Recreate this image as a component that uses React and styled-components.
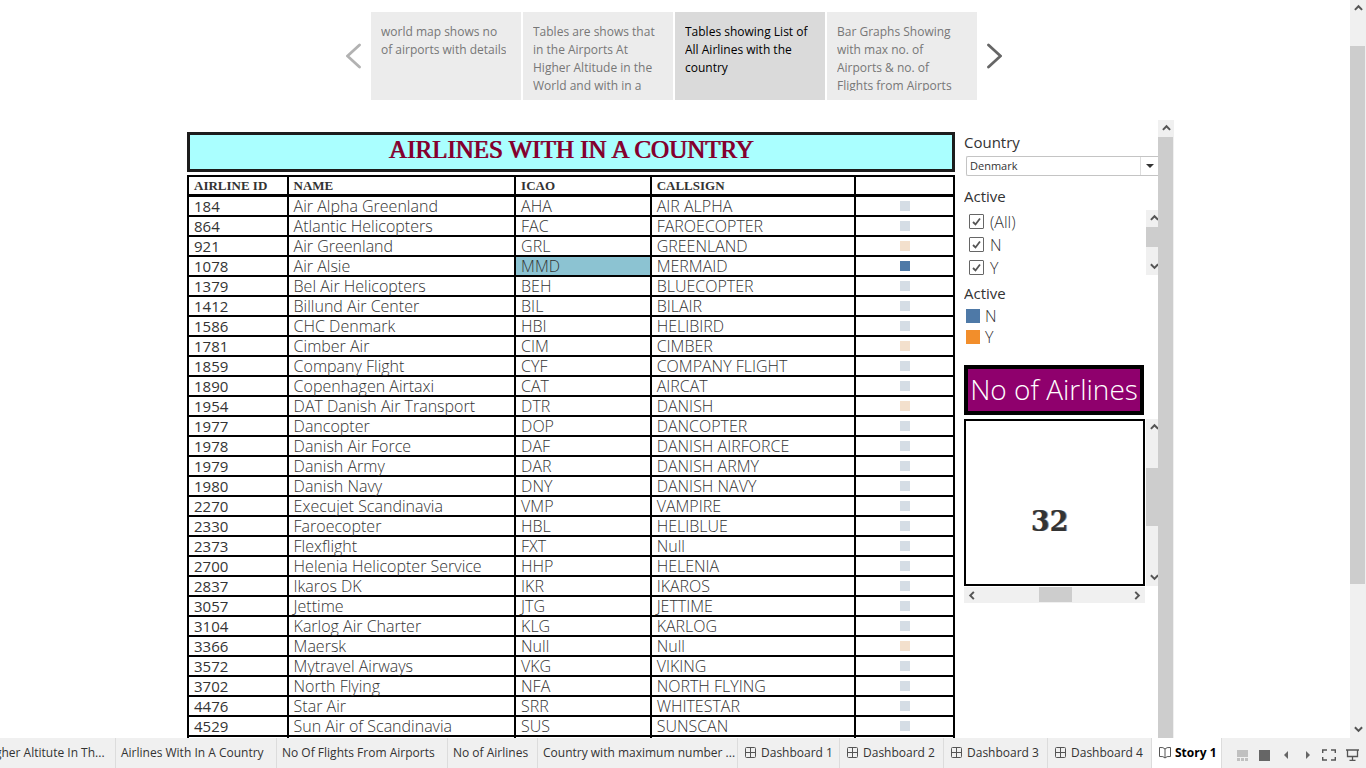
import React from "react";
import styled, { createGlobalStyle } from "styled-components";

const GlobalStyle = createGlobalStyle`
  *, *::before, *::after { box-sizing: border-box; }
  body {
    margin: 0;
    background: #fff;
    color: #333;
    font-family: "Open Sans", "Noto Sans", sans-serif;
    font-weight: 300;
  }
  button { font: inherit; color: inherit; border: 0; padding: 0; background: none; cursor: pointer; }
`;

const serif = `"Liberation Serif", "Times New Roman", serif`;

const Page = styled.div`
  display: flex;
  flex-direction: column;
  height: 100vh;
  overflow: hidden;
`;

const Workspace = styled.div`
  display: flex;
  flex: 1;
  min-height: 0;
`;

const Story = styled.main`
  flex: 1;
  min-width: 0;
  overflow: hidden;
  display: flex;
  flex-direction: column;
  align-items: center;
  padding: 12px 2px 0 0;
`;

/* Story points */

const StoryNav = styled.nav`
  display: flex;
  align-items: center;
  gap: 9px;
  flex-shrink: 0;
`;

const NavArrow = styled.button`
  display: flex;
  color: ${(p) => (p.$dim ? "#b2b2b2" : "#666")};
`;

const Points = styled.div`
  display: flex;
  gap: 2px;
`;

const Point = styled.button`
  width: 150px;
  height: 88px;
  padding: 11px 0 9px 10px;
  display: flex;
  align-items: flex-start;
  text-align: left;
  background: ${(p) => (p.$active ? "#dadada" : "#ececec")};
  color: ${(p) => (p.$active ? "#000" : "#777")};
`;

const PointText = styled.span`
  display: block;
  max-height: 68px;
  overflow: hidden;
  font-size: 12px;
  font-weight: 400;
  line-height: 18px;
  white-space: pre;
`;

/* Dashboard */

const Dashboard = styled.section`
  display: flex;
  flex: 1;
  min-height: 0;
  width: 100%;
  max-width: 1000px;
  margin-top: 20px;
`;

const Content = styled.div`
  flex: 1;
  min-width: 0;
  display: flex;
  gap: 9px;
  padding: 12px 0 0 13px;
  overflow: hidden;
`;

const Sheet = styled.div`
  flex: 1;
  min-width: 0;
`;

const Title = styled.h1`
  margin: 0 0 3px;
  height: 40px;
  border: 3px solid #1c1c1c;
  background: #aaffff;
  color: #84002e;
  font-family: ${serif};
  font-size: 25px;
  font-weight: 400;
  line-height: 30px;
  text-align: center;
  text-shadow: 1px 0 #84002e;
`;

const Table = styled.table`
  width: 100%;
  table-layout: fixed;
  border-collapse: collapse;
  font-size: 16px;
  line-height: 18px;
`;

const Col = styled.col`
  width: ${(p) => p.$w};
`;

const cell = `
  height: 20px;
  padding: 0 0 0 5px;
  border: 2px solid #000;
  text-align: left;
  white-space: nowrap;
`;

const HeadCell = styled.th`
  ${cell}
  height: 19px;
  padding-top: 1px;
  border-bottom-width: 3px;
  font-family: ${serif};
  font-size: 13px;
  font-weight: 700;
  line-height: 15px;
`;

const IdCell = styled.th`
  ${cell}
  font-size: 15px;
  font-weight: 400;
`;

const Cell = styled.td`
  ${cell}
  background: ${(p) => (p.$selected ? "#8cc3d2" : "transparent")};
`;

const Mark = styled.span`
  display: block;
  width: 10px;
  height: 10px;
  margin: 0 auto;
  background: ${(p) => p.$color};
`;

const MarkCell = styled(Cell)`
  padding: 0;
`;

/* Side panel */

const Side = styled.aside`
  width: 194px;
  flex-shrink: 0;
  overflow: hidden;
`;

const Label = styled.label`
  display: block;
  height: 24px;
  font-size: 15px;
  font-weight: 400;
  line-height: 20px;
`;

const Caption = styled.legend`
  padding: 0;
  height: 23px;
  font-size: 15px;
  font-weight: 400;
  line-height: 22px;
`;

const SelectBox = styled.div`
  display: flex;
  height: 20px;
  margin-left: 2px;
  position: relative;
  border: 1px solid #c4c4c4;
  border-right: 0;
  border-radius: 2px 0 0 2px;
`;

const Select = styled.select`
  flex: 1;
  appearance: none;
  border: 0;
  padding: 0 0 2px 3px;
  background: transparent;
  color: #333;
  font: 400 11px "Open Sans", sans-serif;
`;

const SelectArrow = styled.span`
  position: absolute;
  right: 0;
  top: 0;
  width: 18px;
  height: 18px;
  display: grid;
  place-items: center;
  border-left: 1px solid #ddd;
  pointer-events: none;
`;

const Group = styled.fieldset`
  margin: 0;
  padding: 0;
  border: 0;
  min-width: 0;
  margin-top: ${(p) => p.$top}px;
`;

const Options = styled.div`
  display: flex;
  justify-content: space-between;
  height: 65px;
  margin-top: 2px;
  overflow: hidden;
`;

const OptionList = styled.div`
  padding: 0 0 0 5px;
`;

const Option = styled.label`
  display: flex;
  align-items: center;
  gap: 6px;
  height: 23px;
  font-size: 16px;
`;

const Check = styled.input`
  appearance: none;
  margin: 0;
  width: 15px;
  height: 15px;
  border: 1px solid #666;
  border-radius: 1px;
  background: #fff url("data:image/svg+xml,%3Csvg xmlns='http://www.w3.org/2000/svg' viewBox='0 0 13 13'%3E%3Cpath d='M3 7l2.5 2.5L10 3.5' fill='none' stroke='%23555' stroke-width='1.8'/%3E%3C/svg%3E") center / 13px 13px no-repeat;
`;

const Key = styled.div`
  display: flex;
  align-items: center;
  gap: 5px;
  height: 21px;
  padding-left: 2px;
  font-size: 16px;
`;

const Swatch = styled.span`
  width: 14px;
  height: 14px;
  background: ${(p) => p.$color};
`;

const CountTitle = styled.h2`
  width: 180px;
  height: 50px;
  margin: 18px 0 4px;
  border: 4px solid #000;
  background: #8f006d;
  color: #fff;
  font-size: 28px;
  font-weight: 300;
  line-height: 40px;
  text-align: center;
  white-space: nowrap;
`;

const CountRow = styled.div`
  display: flex;
  gap: 1px;
  height: 167px;
`;

const Count = styled.div`
  width: 181px;
  flex-shrink: 0;
  border: 2px solid #000;
  display: grid;
  place-items: center;
  padding: 38px 10px 0 0;
  font-family: "DejaVu Serif", serif;
  font-size: 27px;
  font-weight: 700;
  text-shadow: 1px 0 #999;
`;

/* Scrollbars */

const Bar = styled.div`
  display: flex;
  flex-direction: ${(p) => (p.$horizontal ? "row" : "column")};
  ${(p) => (p.$horizontal ? "height: 16px; width: 181px; margin-top: 1px;" : "width: 16px;")}
  flex-shrink: 0;
  background: #f0f0f0;
`;

const BarButton = styled.button`
  width: 16px;
  height: 17px;
  flex-shrink: 0;
  display: grid;
  place-items: center;
`;

const Track = styled.div`
  flex: 1;
  min-height: 0;
  display: flex;
  flex-direction: inherit;
  padding: ${(p) => p.$inset || "0"};
`;

const Thumb = styled.div`
  flex: 1;
  background: #cdcdcd;
  ${(p) => (p.$horizontal ? "margin-bottom: 1px;" : "margin-right: 1px;")}
`;

const ClippedBar = styled.div`
  width: 12px;
  display: flex;
  overflow: hidden;
`;

/* Sheet tabs */

const Footer = styled.footer`
  display: flex;
  height: 30px;
  flex-shrink: 0;
  background: #f0f0f0;
  color: #333;
`;

const Tabs = styled.nav`
  flex: 1;
  min-width: 0;
  display: flex;
  justify-content: flex-end;
  overflow: hidden;
`;

const Tab = styled.button`
  width: ${(p) => p.$w}px;
  flex-shrink: 0;
  display: flex;
  align-items: center;
  gap: 4px;
  padding: 0 0 2px ${(p) => (p.$icon ? 7 : 5)}px;
  border-right: 1px solid #dcdcdc;
  font-size: 12px;
  font-weight: ${(p) => (p.$active ? 700 : 400)};
  color: ${(p) => (p.$active ? "#000" : "#333")};
  background: ${(p) => (p.$active ? "#fff" : "transparent")};
  white-space: nowrap;
`;

const Tools = styled.div`
  width: 144px;
  display: flex;
  justify-content: space-between;
  align-items: center;
  padding: 4px 7px 0 15px;
`;

const Tool = styled.button`
  display: flex;
`;

const arrows = {
  up: "M1 6.5L5 2.5L9 6.5",
  down: "M1 2.5L5 6.5L9 2.5",
  left: "M6.5 1L2.5 5L6.5 9",
  right: "M2.5 1L6.5 5L2.5 9",
};

function Arrow({ dir }) {
  return (
    <BarButton aria-label={`Scroll ${dir}`}>
      <svg width="9" height="9" viewBox="0 0 10 10" fill="none" stroke="#555" strokeWidth="2.2">
        <path d={arrows[dir]} />
      </svg>
    </BarButton>
  );
}

function Scrollbar({ horizontal, inset }) {
  return (
    <Bar $horizontal={horizontal}>
      <Arrow dir={horizontal ? "left" : "up"} />
      <Track $inset={inset}>
        <Thumb $horizontal={horizontal} />
      </Track>
      <Arrow dir={horizontal ? "right" : "down"} />
    </Bar>
  );
}

function DashboardIcon() {
  return (
    <svg width="12" height="11" viewBox="0 0 12 11" fill="none" stroke="#555">
      <rect x="0.5" y="0.5" width="10" height="10" rx="1" />
      <path d="M5.5 0.5v10M0.5 5.5h10" />
    </svg>
  );
}

function StoryIcon() {
  return (
    <svg width="12" height="13" viewBox="0 0 12 13" fill="none" stroke="#555">
      <path d="M0.5 1.5Q4.5 1 6 3Q7.5 1 11.5 1.5V10.5Q7.5 10 6 12Q4.5 10 0.5 10.5ZM6 3V12" />
    </svg>
  );
}

const points = [
  "world map shows no\nof airports with details",
  "Tables are shows that\nin the Airports At\nHigher Altitude in the\nWorld and with in a",
  "Tables showing List of\nAll Airlines with the\ncountry",
  "Bar Graphs Showing\nwith max no. of\nAirports & no. of\nFlights from Airports",
];

const airlines = [
  ["184", "Air Alpha Greenland", "AHA", "AIR ALPHA"],
  ["864", "Atlantic Helicopters", "FAC", "FAROECOPTER"],
  ["921", "Air Greenland", "GRL", "GREENLAND", "Y"],
  ["1078", "Air Alsie", "MMD", "MERMAID", "selected"],
  ["1379", "Bel Air Helicopters", "BEH", "BLUECOPTER"],
  ["1412", "Billund Air Center", "BIL", "BILAIR"],
  ["1586", "CHC Denmark", "HBI", "HELIBIRD"],
  ["1781", "Cimber Air", "CIM", "CIMBER", "Y"],
  ["1859", "Company Flight", "CYF", "COMPANY FLIGHT"],
  ["1890", "Copenhagen Airtaxi", "CAT", "AIRCAT"],
  ["1954", "DAT Danish Air Transport", "DTR", "DANISH", "Y"],
  ["1977", "Dancopter", "DOP", "DANCOPTER"],
  ["1978", "Danish Air Force", "DAF", "DANISH AIRFORCE"],
  ["1979", "Danish Army", "DAR", "DANISH ARMY"],
  ["1980", "Danish Navy", "DNY", "DANISH NAVY"],
  ["2270", "Execujet Scandinavia", "VMP", "VAMPIRE"],
  ["2330", "Faroecopter", "HBL", "HELIBLUE"],
  ["2373", "Flexflight", "FXT", "Null"],
  ["2700", "Helenia Helicopter Service", "HHP", "HELENIA"],
  ["2837", "Ikaros DK", "IKR", "IKAROS"],
  ["3057", "Jettime", "JTG", "JETTIME"],
  ["3104", "Karlog Air Charter", "KLG", "KARLOG"],
  ["3366", "Maersk", "Null", "Null", "Y"],
  ["3572", "Mytravel Airways", "VKG", "VIKING"],
  ["3702", "North Flying", "NFA", "NORTH FLYING"],
  ["4476", "Star Air", "SRR", "WHITESTAR"],
  ["4529", "Sun Air of Scandinavia", "SUS", "SUNSCAN"],
  ["", "", "", ""],
];

const markColors = { Y: "#f3e0cd", selected: "#4e79a7", N: "#d5dde5" };

const tabs = [
  { name: "Airports At Higher Altitute In Th...", w: 201 },
  { name: "Airlines With In A Country", w: 161 },
  { name: "No Of Flights From Airports", w: 171 },
  { name: "No of Airlines", w: 90 },
  { name: "Country with maximum number ...", w: 200 },
  { name: "Dashboard 1", w: 102, icon: true },
  { name: "Dashboard 2", w: 104, icon: true },
  { name: "Dashboard 3", w: 104, icon: true },
  { name: "Dashboard 4", w: 104, icon: true },
  { name: "Story 1", w: 70, active: true },
];

export default function App() {
  return (
    <Page>
      <GlobalStyle />
      <Workspace>
        <Story>
          <StoryNav aria-label="Story points">
            <NavArrow $dim aria-label="Previous">
              <svg width="16" height="26" viewBox="0 0 16 26" fill="none" stroke="currentColor" strokeWidth="2.8" strokeLinecap="round">
                <path d="M13.5 2L1.5 13L13.5 24" />
              </svg>
            </NavArrow>
            <Points>
              {points.map((text, i) => (
                <Point key={text} $active={i === 2}>
                  <PointText>{text}</PointText>
                </Point>
              ))}
            </Points>
            <NavArrow aria-label="Next">
              <svg width="16" height="26" viewBox="0 0 16 26" fill="none" stroke="currentColor" strokeWidth="2.8" strokeLinecap="round">
                <path d="M2.5 2L14.5 13L2.5 24" />
              </svg>
            </NavArrow>
          </StoryNav>

          <Dashboard>
            <Content>
              <Sheet>
                <Title>AIRLINES WITH IN A COUNTRY</Title>
                <Table>
                  <colgroup>
                    <Col $w="13%" />
                    <Col $w="29.7%" />
                    <Col $w="17.7%" />
                    <Col $w="26.7%" />
                    <Col />
                  </colgroup>
                  <thead>
                    <tr>
                      <HeadCell>AIRLINE ID</HeadCell>
                      <HeadCell>NAME</HeadCell>
                      <HeadCell>ICAO</HeadCell>
                      <HeadCell>CALLSIGN</HeadCell>
                      <HeadCell aria-label="Active" />
                    </tr>
                  </thead>
                  <tbody>
                    {airlines.map(([id, name, icao, callsign, state]) => (
                      <tr key={id}>
                        <IdCell scope="row">{id}</IdCell>
                        <Cell>{name}</Cell>
                        <Cell $selected={state === "selected"}>{icao}</Cell>
                        <Cell>{callsign}</Cell>
                        <MarkCell>{id && <Mark $color={markColors[state || "N"]} />}</MarkCell>
                      </tr>
                    ))}
                  </tbody>
                </Table>
              </Sheet>

              <Side>
                <Label htmlFor="country">Country</Label>
                <SelectBox>
                  <Select id="country" defaultValue="Denmark">
                    <option>Denmark</option>
                  </Select>
                  <SelectArrow>
                    <svg width="8" height="4" viewBox="0 0 8 4" fill="#333">
                      <path d="M0 0H8L4 4Z" />
                    </svg>
                  </SelectArrow>
                </SelectBox>

                <Group $top={9}>
                  <Caption>Active</Caption>
                  <Options>
                    <OptionList>
                      {["(All)", "N", "Y"].map((o) => (
                        <Option key={o}>
                          <Check type="checkbox" defaultChecked />
                          {o}
                        </Option>
                      ))}
                    </OptionList>
                    <ClippedBar>
                      <Scrollbar inset="0 0 11px" />
                    </ClippedBar>
                  </Options>
                </Group>

                <Group $top={7}>
                  <Caption>Active</Caption>
                  <Key><Swatch $color="#4e79a7" />N</Key>
                  <Key><Swatch $color="#f28e2b" />Y</Key>
                </Group>

                <CountTitle>No of Airlines</CountTitle>
                <CountRow>
                  <Count>32</Count>
                  <ClippedBar>
                    <Scrollbar inset="32px 0 43px" />
                  </ClippedBar>
                </CountRow>
                <Scrollbar horizontal inset="0 57px 0 59px" />
              </Side>
            </Content>
            <Bar>
              <Arrow dir="up" />
              <Track>
                <Thumb />
              </Track>
            </Bar>
          </Dashboard>
        </Story>
        <Scrollbar inset="29px 0 137px" />
      </Workspace>

      <Footer>
        <Tabs aria-label="Sheets">
          {tabs.map((t) => (
            <Tab key={t.name} $w={t.w} $active={t.active} $icon={t.icon || t.active}>
              {t.icon && <DashboardIcon />}
              {t.active && <StoryIcon />}
              {t.name}
            </Tab>
          ))}
        </Tabs>
        <Tools>
          <Tool aria-label="Show filmstrip">
            <svg width="12" height="12" viewBox="0 0 12 12" fill="#c0c0c0">
              <path d="M0 1h11v7H0zM0 9h3v3H0zM4 9h3v3H4zM8 9h3v3H8z" />
            </svg>
          </Tool>
          <Tool aria-label="Show tabs">
            <svg width="11" height="11" viewBox="0 0 11 11" fill="#666"><path d="M0 0h11v11H0z" /></svg>
          </Tool>
          <Tool aria-label="Previous sheet">
            <svg width="10" height="8" viewBox="0 0 10 8" fill="#666"><path d="M7 0v8L3 4z" /></svg>
          </Tool>
          <Tool aria-label="Next sheet">
            <svg width="10" height="8" viewBox="0 0 10 8" fill="#666"><path d="M5 0v8l4-4z" /></svg>
          </Tool>
          <Tool aria-label="Full screen">
            <svg width="14" height="12" viewBox="0 0 14 12" fill="none" stroke="#555" strokeWidth="1.4">
              <path d="M0.700 4V1H5M9 1h4.300V4M13.300 8v3H9M5 11H0.700V8" />
            </svg>
          </Tool>
          <Tool aria-label="Presentation mode">
            <svg width="13" height="12" viewBox="0 0 13 12" fill="none" stroke="#555" strokeWidth="1.3">
              <path d="M0 1h13M1.5 1v6.500h10V1M6.5 7.500v4M3.5 11.300h6" />
            </svg>
          </Tool>
        </Tools>
      </Footer>
    </Page>
  );
}
